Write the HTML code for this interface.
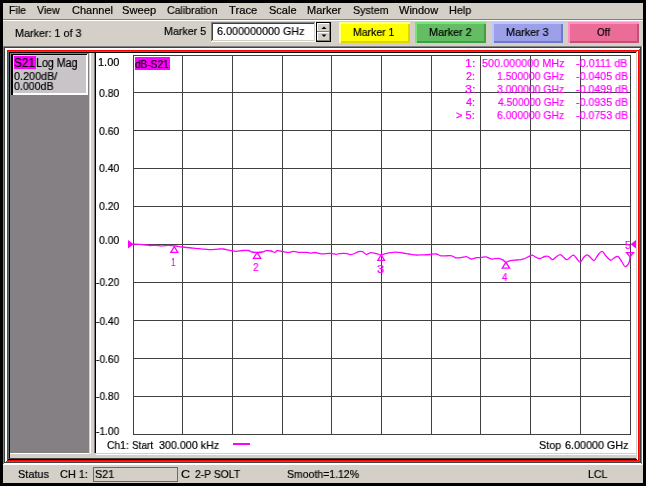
<!DOCTYPE html>
<html><head><meta charset="utf-8">
<style>
*{margin:0;padding:0;box-sizing:border-box}
html,body{width:646px;height:486px;overflow:hidden;background:#000}
body{position:relative;font-family:"Liberation Sans",sans-serif;font-size:11px;color:#000}
.a{position:absolute}
.t{position:absolute;white-space:pre;line-height:11px;font-size:11px;will-change:transform;-webkit-text-stroke:0.2px currentColor}
.m{color:#ff00ff}
svg{position:absolute;left:0;top:0}
</style></head><body>
<div class="a" style="left:3px;top:3px;width:640px;height:16px;background:#d4d0c8;"></div>
<div class="t" style="left:8.64px;top:5px;font-size:11px;line-height:11px;color:#000;transform:scaleX(0.9625);transform-origin:0 0;">File</div>
<div class="t" style="left:37.00px;top:5px;font-size:11px;line-height:11px;color:#000;transform:scaleX(0.9583);transform-origin:0 0;">View</div>
<div class="t" style="left:71.50px;top:5px;font-size:11px;line-height:11px;color:#000;">Channel</div>
<div class="t" style="left:122.18px;top:5px;font-size:11px;line-height:11px;color:#000;transform:scaleX(1.0156);transform-origin:0 0;">Sweep</div>
<div class="t" style="left:167.04px;top:5px;font-size:11px;line-height:11px;color:#000;transform:scaleX(0.9608);transform-origin:0 0;">Calibration</div>
<div class="t" style="left:229.40px;top:5px;font-size:11px;line-height:11px;color:#000;transform:scaleX(1.0222);transform-origin:0 0;">Trace</div>
<div class="t" style="left:268.70px;top:5px;font-size:11px;line-height:11px;color:#000;">Scale</div>
<div class="t" style="left:307.00px;top:5px;font-size:11px;line-height:11px;color:#000;">Marker</div>
<div class="t" style="left:352.53px;top:5px;font-size:11px;line-height:11px;color:#000;transform:scaleX(0.9714);transform-origin:0 0;">System</div>
<div class="t" style="left:399.00px;top:5px;font-size:11px;line-height:11px;color:#000;">Window</div>
<div class="t" style="left:449.42px;top:5px;font-size:11px;line-height:11px;color:#000;transform:scaleX(0.9810);transform-origin:0 0;">Help</div>
<div class="a" style="left:3px;top:19px;width:640px;height:1px;background:#808080;"></div>
<div class="a" style="left:3px;top:20px;width:640px;height:1px;background:#fff;"></div>
<div class="a" style="left:3px;top:21px;width:640px;height:25px;background:#d4d0c8;"></div>
<div class="t" style="left:14.62px;top:28px;font-size:11px;line-height:11px;color:#000;transform:scaleX(0.9791);transform-origin:0 0;">Marker: 1 of 3</div>
<div class="t" style="left:164.03px;top:26px;font-size:11px;line-height:11px;color:#000;transform:scaleX(0.9714);transform-origin:0 0;">Marker 5</div>
<div class="a" style="left:211px;top:22px;width:105px;height:20px;background:#fff;"></div>
<div class="a" style="left:211px;top:22px;width:105px;height:1px;background:#808080;"></div>
<div class="a" style="left:211px;top:22px;width:1px;height:20px;background:#808080;"></div>
<div class="a" style="left:212px;top:23px;width:103px;height:1px;background:#404040;"></div>
<div class="a" style="left:212px;top:23px;width:1px;height:18px;background:#404040;"></div>
<div class="a" style="left:211px;top:41px;width:105px;height:1px;background:#fff;"></div>
<div class="a" style="left:315px;top:22px;width:1px;height:20px;background:#fff;"></div>
<div class="a" style="left:212px;top:40px;width:103px;height:1px;background:#d4d0c8;"></div>
<div class="a" style="left:314px;top:23px;width:1px;height:18px;background:#d4d0c8;"></div>
<div class="t" style="left:216.72px;top:26px;font-size:11px;line-height:11px;color:#000;transform:scaleX(0.9807);transform-origin:0 0;">6.000000000 GHz</div>
<div class="a" style="left:316px;top:22px;width:15px;height:20px;background:#000;"></div>
<div class="a" style="left:317px;top:23px;width:13px;height:9px;background:#d4d0c8;"></div>
<div class="a" style="left:317px;top:23px;width:13px;height:1px;background:#fff;"></div>
<div class="a" style="left:317px;top:23px;width:1px;height:9px;background:#fff;"></div>
<div class="a" style="left:317px;top:31px;width:13px;height:1px;background:#808080;"></div>
<div class="a" style="left:329px;top:23px;width:1px;height:9px;background:#808080;"></div>
<div class="a" style="left:317px;top:32px;width:13px;height:9px;background:#d4d0c8;"></div>
<div class="a" style="left:317px;top:32px;width:13px;height:1px;background:#fff;"></div>
<div class="a" style="left:317px;top:32px;width:1px;height:9px;background:#fff;"></div>
<div class="a" style="left:317px;top:40px;width:13px;height:1px;background:#808080;"></div>
<div class="a" style="left:329px;top:32px;width:1px;height:9px;background:#808080;"></div>
<svg width="646" height="486"><path d="M321.5 29h5l-2.5-2.5z" fill="#000"/><path d="M321.5 34.5h5l-2.5 2.5z" fill="#000"/></svg>
<div class="a" style="left:339px;top:22px;width:71px;height:21px;background:#ffff00;"></div>
<div class="a" style="left:339px;top:22px;width:71px;height:2px;background:#ffff90;"></div>
<div class="a" style="left:339px;top:22px;width:2px;height:21px;background:#ffff90;"></div>
<div class="a" style="left:341px;top:41px;width:69px;height:2px;background:#e0d400;"></div>
<div class="a" style="left:408px;top:24px;width:2px;height:19px;background:#e0d400;"></div>
<div class="a" style="left:415px;top:22px;width:71px;height:21px;background:#64bc64;"></div>
<div class="a" style="left:415px;top:22px;width:71px;height:2px;background:#78e478;"></div>
<div class="a" style="left:415px;top:22px;width:2px;height:21px;background:#78e478;"></div>
<div class="a" style="left:417px;top:41px;width:69px;height:2px;background:#40a040;"></div>
<div class="a" style="left:484px;top:24px;width:2px;height:19px;background:#40a040;"></div>
<div class="a" style="left:492px;top:22px;width:71px;height:21px;background:#9ca0e8;"></div>
<div class="a" style="left:492px;top:22px;width:71px;height:2px;background:#c0c4ff;"></div>
<div class="a" style="left:492px;top:22px;width:2px;height:21px;background:#c0c4ff;"></div>
<div class="a" style="left:494px;top:41px;width:69px;height:2px;background:#7078c8;"></div>
<div class="a" style="left:561px;top:24px;width:2px;height:19px;background:#7078c8;"></div>
<div class="a" style="left:568px;top:22px;width:71px;height:21px;background:#ec6c98;"></div>
<div class="a" style="left:568px;top:22px;width:71px;height:2px;background:#ff90c8;"></div>
<div class="a" style="left:568px;top:22px;width:2px;height:21px;background:#ff90c8;"></div>
<div class="a" style="left:570px;top:41px;width:69px;height:2px;background:#c05078;"></div>
<div class="a" style="left:637px;top:24px;width:2px;height:19px;background:#c05078;"></div>
<div class="t" style="left:353.05px;top:27px;font-size:11px;line-height:11px;color:#000;transform:scaleX(0.9524);transform-origin:0 0;">Marker 1</div>
<div class="t" style="left:428.72px;top:27px;font-size:11px;line-height:11px;color:#000;transform:scaleX(0.9833);transform-origin:0 0;">Marker 2</div>
<div class="t" style="left:506.02px;top:27px;font-size:11px;line-height:11px;color:#000;transform:scaleX(0.9833);transform-origin:0 0;">Marker 3</div>
<div class="t" style="left:596.50px;top:27px;font-size:11px;line-height:11px;color:#000;transform:scaleX(0.9000);transform-origin:0 0;">Off</div>
<div class="a" style="left:3px;top:46px;width:640px;height:1px;background:#808080;"></div>
<div class="a" style="left:3px;top:46px;width:1px;height:419px;background:#808080;"></div>
<div class="a" style="left:3px;top:464px;width:640px;height:1px;background:#fff;"></div>
<div class="a" style="left:642px;top:46px;width:1px;height:419px;background:#fff;"></div>
<div class="a" style="left:4px;top:47px;width:638px;height:1px;background:#404040;"></div>
<div class="a" style="left:4px;top:47px;width:1px;height:417px;background:#404040;"></div>
<div class="a" style="left:4px;top:463px;width:638px;height:1px;background:#fff;"></div>
<div class="a" style="left:641px;top:47px;width:1px;height:417px;background:#808080;"></div>
<div class="a" style="left:5px;top:48px;width:636px;height:1px;background:#fff;"></div>
<div class="a" style="left:5px;top:48px;width:1px;height:415px;background:#fff;"></div>
<div class="a" style="left:5px;top:462px;width:636px;height:1px;background:#404040;"></div>
<div class="a" style="left:640px;top:48px;width:1px;height:415px;background:#404040;"></div>
<div class="a" style="left:6px;top:49px;width:634px;height:1px;background:#fff;"></div>
<div class="a" style="left:6px;top:49px;width:1px;height:413px;background:#fff;"></div>
<div class="a" style="left:6px;top:461px;width:634px;height:1px;background:#5a6e6e;"></div>
<div class="a" style="left:639px;top:49px;width:1px;height:413px;background:#5a6e6e;"></div>
<div class="a" style="left:7px;top:50px;width:632px;height:1px;background:#ff0000;"></div>
<div class="a" style="left:7px;top:50px;width:1px;height:411px;background:#ff0000;"></div>
<div class="a" style="left:7px;top:460px;width:632px;height:1px;background:#ff0000;"></div>
<div class="a" style="left:638px;top:50px;width:1px;height:411px;background:#ff0000;"></div>
<div class="a" style="left:8px;top:51px;width:630px;height:1px;background:#5a6e6e;"></div>
<div class="a" style="left:8px;top:51px;width:1px;height:409px;background:#5a6e6e;"></div>
<div class="a" style="left:8px;top:459px;width:630px;height:1px;background:#000;"></div>
<div class="a" style="left:637px;top:51px;width:1px;height:409px;background:#fff;"></div>
<div class="a" style="left:9px;top:52px;width:628px;height:1px;background:#000;"></div>
<div class="a" style="left:9px;top:52px;width:1px;height:407px;background:#000;"></div>
<div class="a" style="left:9px;top:458px;width:628px;height:1px;background:#404040;"></div>
<div class="a" style="left:636px;top:52px;width:1px;height:407px;background:#d4d0c8;"></div>
<div class="a" style="left:10px;top:53px;width:626px;height:405px;background:#d4d0c8;"></div>
<div class="a" style="left:10px;top:53px;width:79px;height:400px;background:#848084;"></div>
<div class="a" style="left:89px;top:53px;width:1px;height:405px;background:#d4d0c8;"></div>
<div class="a" style="left:90px;top:53px;width:1px;height:401px;background:#fff;"></div>
<div class="a" style="left:94px;top:53px;width:1px;height:400px;background:#808080;"></div>
<div class="a" style="left:95px;top:53px;width:1px;height:400px;background:#000;"></div>
<div class="a" style="left:96px;top:53px;width:540px;height:400px;background:#fff;"></div>
<div class="a" style="left:10px;top:453px;width:79px;height:1px;background:#fff;"></div>
<div class="a" style="left:96px;top:454px;width:540px;height:1px;background:#fff;"></div>
<div class="a" style="left:11px;top:54px;width:77px;height:41px;background:#c8c4c8;"></div>
<div class="a" style="left:11px;top:54px;width:77px;height:1px;background:#000;"></div>
<div class="a" style="left:11px;top:54px;width:1px;height:41px;background:#000;"></div>
<div class="a" style="left:12px;top:54px;width:1px;height:41px;background:#000;"></div>
<div class="a" style="left:13px;top:93px;width:75px;height:1px;background:#fff;"></div>
<div class="a" style="left:13px;top:94px;width:75px;height:1px;background:#fff;"></div>
<div class="a" style="left:86px;top:55px;width:1px;height:40px;background:#fff;"></div>
<div class="a" style="left:87px;top:54px;width:1px;height:41px;background:#fff;"></div>
<div class="a" style="left:13px;top:55px;width:73px;height:1px;background:#d4d0c8;"></div>
<div class="a" style="left:13px;top:55px;width:1px;height:38px;background:#d4d0c8;"></div>
<div class="a" style="left:14px;top:56px;width:22px;height:13px;background:#ff00ff;"></div>
<div class="t" style="left:13.72px;top:57px;font-size:12px;line-height:12px;color:#000;transform:scaleX(0.9750);transform-origin:0 0;">S21</div>
<div class="t" style="left:36.11px;top:57px;font-size:12px;line-height:12px;color:#000;transform:scaleX(0.8889);transform-origin:0 0;">Log Mag</div>
<div class="t" style="left:13.70px;top:71px;font-size:11px;line-height:11px;color:#000;transform:scaleX(0.9818);transform-origin:0 0;">0.200dB/</div>
<div class="t" style="left:13.70px;top:81px;font-size:11px;line-height:11px;color:#000;transform:scaleX(0.9634);transform-origin:0 0;">0.000dB</div>
<svg width="646" height="486"><path d="M133.5 55V435M182.5 55V435M232.5 55V435M282.5 55V435M331.5 55V435M381.5 55V435M431.5 55V435M480.5 55V435M530.5 55V435M580.5 55V435M630.5 55V435M133 55.5H631M133 92.5H631M133 130.5H631M133 168.5H631M133 206.5H631M133 244.5H631M133 282.5H631M133 320.5H631M133 358.5H631M133 396.5H631M133 434.5H631" stroke="#404040" stroke-width="1" fill="none" shape-rendering="crispEdges"/></svg>
<div class="t" style="left:98.30px;top:57px;font-size:11px;line-height:11px;color:#000;">1.00</div>
<div class="t" style="left:99.30px;top:88px;font-size:11px;line-height:11px;color:#000;transform:scaleX(0.9476);transform-origin:0 0;">0.80</div>
<div class="t" style="left:99.30px;top:126px;font-size:11px;line-height:11px;color:#000;transform:scaleX(0.9476);transform-origin:0 0;">0.60</div>
<div class="t" style="left:99.30px;top:163px;font-size:11px;line-height:11px;color:#000;transform:scaleX(0.9476);transform-origin:0 0;">0.40</div>
<div class="t" style="left:99.30px;top:201px;font-size:11px;line-height:11px;color:#000;transform:scaleX(0.9476);transform-origin:0 0;">0.20</div>
<div class="t" style="left:99.30px;top:235px;font-size:11px;line-height:11px;color:#000;transform:scaleX(0.9476);transform-origin:0 0;">0.00</div>
<div class="t" style="left:96.00px;top:277px;font-size:11px;line-height:11px;color:#000;transform:scaleX(0.9280);transform-origin:0 0;">-0.20</div>
<div class="t" style="left:96.00px;top:316px;font-size:11px;line-height:11px;color:#000;transform:scaleX(0.9280);transform-origin:0 0;">-0.40</div>
<div class="t" style="left:96.00px;top:354px;font-size:11px;line-height:11px;color:#000;transform:scaleX(0.9280);transform-origin:0 0;">-0.60</div>
<div class="t" style="left:96.00px;top:391px;font-size:11px;line-height:11px;color:#000;transform:scaleX(0.9280);transform-origin:0 0;">-0.80</div>
<div class="t" style="left:96.00px;top:426px;font-size:11px;line-height:11px;color:#000;transform:scaleX(0.9280);transform-origin:0 0;">-1.00</div>
<div class="a" style="left:135px;top:57px;width:35px;height:13px;background:#ff00ff;"></div>
<div class="t" style="left:135.30px;top:59px;font-size:11px;line-height:11px;color:#000;transform:scaleX(0.9167);transform-origin:0 0;">dB-S21</div>
<div class="t" style="left:465.17px;top:58px;font-size:11px;line-height:11px;color:#ff00ff;transform:scaleX(1.1286);transform-origin:0 0;">1:</div>
<div class="t" style="left:482.41px;top:58px;font-size:11px;line-height:11px;color:#ff00ff;transform:scaleX(0.9854);transform-origin:0 0;">500.000000 MHz</div>
<div class="t" style="left:576.00px;top:58px;font-size:11px;line-height:11px;color:#ff00ff;transform:scaleX(0.9865);transform-origin:0 0;">-0.0111 dB</div>
<div class="t" style="left:466.30px;top:71px;font-size:11px;line-height:11px;color:#ff00ff;transform:scaleX(0.9875);transform-origin:0 0;">2:</div>
<div class="t" style="left:497.05px;top:71px;font-size:11px;line-height:11px;color:#ff00ff;transform:scaleX(0.9457);transform-origin:0 0;">1.500000 GHz</div>
<div class="t" style="left:576.00px;top:71px;font-size:11px;line-height:11px;color:#ff00ff;transform:scaleX(0.9679);transform-origin:0 0;">-0.0405 dB</div>
<div class="t" style="left:465.17px;top:84px;font-size:11px;line-height:11px;color:#ff00ff;transform:scaleX(1.1286);transform-origin:0 0;">3:</div>
<div class="t" style="left:497.05px;top:84px;font-size:11px;line-height:11px;color:#ff00ff;transform:scaleX(0.9457);transform-origin:0 0;">3.000000 GHz</div>
<div class="t" style="left:576.00px;top:84px;font-size:11px;line-height:11px;color:#ff00ff;transform:scaleX(0.9679);transform-origin:0 0;">-0.0499 dB</div>
<div class="t" style="left:466.30px;top:97px;font-size:11px;line-height:11px;color:#ff00ff;transform:scaleX(0.9875);transform-origin:0 0;">4:</div>
<div class="t" style="left:498.00px;top:97px;font-size:11px;line-height:11px;color:#ff00ff;transform:scaleX(0.9324);transform-origin:0 0;">4.500000 GHz</div>
<div class="t" style="left:576.00px;top:97px;font-size:11px;line-height:11px;color:#ff00ff;transform:scaleX(0.9679);transform-origin:0 0;">-0.0935 dB</div>
<div class="t" style="left:455.99px;top:110px;font-size:11px;line-height:11px;color:#ff00ff;transform:scaleX(1.0118);transform-origin:0 0;">&gt; 5:</div>
<div class="t" style="left:497.05px;top:110px;font-size:11px;line-height:11px;color:#ff00ff;transform:scaleX(0.9457);transform-origin:0 0;">6.000000 GHz</div>
<div class="t" style="left:576.00px;top:110px;font-size:11px;line-height:11px;color:#ff00ff;transform:scaleX(0.9679);transform-origin:0 0;">-0.0753 dB</div>
<svg width="646" height="486"><g fill="none" stroke="#ff00ff" stroke-width="1.3">
<path d="M133.00 244.20C134.17 244.22 137.83 244.17 140.00 244.30C142.17 244.43 144.33 244.80 146.00 245.00C147.67 245.20 148.33 245.43 150.00 245.50C151.67 245.57 154.00 245.35 156.00 245.40C158.00 245.45 160.00 245.82 162.00 245.80C164.00 245.78 166.23 245.32 168.00 245.30C169.77 245.28 171.27 245.58 172.60 245.70C173.93 245.82 174.33 245.78 176.00 246.00C177.67 246.22 179.93 246.67 182.60 247.00C185.27 247.33 188.93 247.70 192.00 248.00C195.07 248.30 198.17 248.53 201.00 248.80C203.83 249.07 206.17 249.55 209.00 249.60C211.83 249.65 215.67 249.20 218.00 249.10C220.33 249.00 221.00 248.80 223.00 249.00C225.00 249.20 227.80 249.92 230.00 250.30C232.20 250.68 234.13 251.27 236.20 251.30C238.27 251.33 240.33 250.63 242.40 250.50C244.47 250.37 247.05 250.25 248.60 250.50C250.15 250.75 250.28 251.67 251.70 252.00C253.12 252.33 255.30 252.50 257.10 252.50C258.90 252.50 260.95 252.30 262.50 252.00C264.05 251.70 264.98 250.87 266.40 250.70C267.82 250.53 269.58 250.72 271.00 251.00C272.42 251.28 273.87 252.45 274.90 252.40C275.93 252.35 275.92 250.83 277.20 250.70C278.48 250.57 280.67 251.32 282.60 251.60C284.53 251.88 286.98 252.45 288.80 252.40C290.62 252.35 291.68 251.30 293.50 251.30C295.32 251.30 297.38 252.22 299.70 252.40C302.02 252.58 305.60 252.27 307.40 252.40C309.20 252.53 309.22 253.18 310.50 253.20C311.78 253.22 313.30 252.40 315.10 252.50C316.90 252.60 318.82 253.65 321.30 253.80C323.78 253.95 327.52 253.32 330.00 253.40C332.48 253.48 334.65 254.27 336.20 254.30C337.75 254.33 337.50 253.72 339.30 253.60C341.10 253.48 345.20 253.43 347.00 253.60C348.80 253.77 349.07 254.53 350.10 254.60C351.13 254.67 351.78 254.50 353.20 254.00C354.62 253.50 357.05 252.00 358.60 251.60C360.15 251.20 361.20 251.15 362.50 251.60C363.80 252.05 364.98 254.13 366.40 254.30C367.82 254.47 369.33 252.72 371.00 252.60C372.67 252.48 374.72 253.20 376.40 253.60C378.08 254.00 379.55 255.00 381.10 255.00C382.65 255.00 383.38 254.07 385.70 253.60C388.02 253.13 392.15 252.30 395.00 252.20C397.85 252.10 400.47 252.70 402.80 253.00C405.13 253.30 406.68 253.67 409.00 254.00C411.32 254.33 414.38 254.87 416.70 255.00C419.02 255.13 420.68 254.88 422.90 254.80C425.12 254.72 427.78 254.63 430.00 254.50C432.22 254.37 434.40 253.78 436.20 254.00C438.00 254.22 439.25 255.50 440.80 255.80C442.35 256.10 443.68 255.80 445.50 255.80C447.32 255.80 450.03 255.47 451.70 255.80C453.37 256.13 453.95 257.50 455.50 257.80C457.05 258.10 459.18 257.80 461.00 257.60C462.82 257.40 464.73 256.37 466.40 256.60C468.07 256.83 469.33 258.83 471.00 259.00C472.67 259.17 474.72 257.83 476.40 257.60C478.08 257.37 479.55 257.72 481.10 257.60C482.65 257.48 483.90 256.67 485.70 256.90C487.50 257.13 489.83 258.75 491.90 259.00C493.97 259.25 496.28 258.27 498.10 258.40C499.92 258.53 501.50 259.17 502.80 259.80C504.10 260.43 504.62 262.07 505.90 262.20C507.18 262.33 508.70 260.97 510.50 260.60C512.30 260.23 514.63 260.23 516.70 260.00C518.77 259.77 520.68 259.90 522.90 259.20C525.12 258.50 528.43 256.47 530.00 255.80C531.57 255.13 531.27 254.93 532.30 255.20C533.33 255.47 534.92 256.85 536.20 257.40C537.48 257.95 538.58 258.65 540.00 258.50C541.42 258.35 543.27 256.83 544.70 256.50C546.13 256.17 547.32 255.98 548.60 256.50C549.88 257.02 551.17 259.52 552.40 259.60C553.63 259.68 554.70 257.83 556.00 257.00C557.30 256.17 558.87 254.52 560.20 254.60C561.53 254.68 562.83 256.67 564.00 257.50C565.17 258.33 565.65 259.98 567.20 259.60C568.75 259.22 571.67 255.30 573.30 255.20C574.93 255.10 575.83 257.87 577.00 259.00C578.17 260.13 579.13 262.33 580.30 262.00C581.47 261.67 582.83 258.18 584.00 257.00C585.17 255.82 586.13 254.73 587.30 254.90C588.47 255.07 589.85 257.07 591.00 258.00C592.15 258.93 593.03 261.00 594.20 260.50C595.37 260.00 596.70 256.52 598.00 255.00C599.30 253.48 600.67 251.23 602.00 251.40C603.33 251.57 604.58 254.53 606.00 256.00C607.42 257.47 609.17 259.87 610.50 260.20C611.83 260.53 612.72 258.60 614.00 258.00C615.28 257.40 616.87 255.93 618.20 256.60C619.53 257.27 620.83 260.33 622.00 262.00C623.17 263.67 624.02 266.53 625.20 266.60C626.38 266.67 628.30 264.00 629.10 262.40C629.90 260.80 629.85 257.90 630.00 257.00"/>
<path d="M174.3 246.6L170.8 252.3H177.8Z"/>
<path d="M257.1 252.6L253.4 258.3H260.8Z"/>
<path d="M381.1 255L377.8 260.3H384.6Z"/>
<path d="M505.9 262.3L502.2 268.2H509.6Z"/>
<path d="M626.5 252.6H633.5L630 256.8Z"/>
</g>
<path d="M128 240L133.7 244.3L128 248.6Z" fill="#ff00ff"/>
<path d="M636 240L630.6 244.3L636 248.6Z" fill="#ff00ff"/>
</svg>
<div class="t" style="left:171.24px;top:257px;font-size:11px;line-height:11px;color:#ff00ff;transform:scaleX(0.7600);transform-origin:0 0;">1</div>
<div class="t" style="left:253.00px;top:262px;font-size:11px;line-height:11px;color:#ff00ff;transform:scaleX(0.9167);transform-origin:0 0;">2</div>
<div class="t" style="left:376.52px;top:264px;font-size:11px;line-height:11px;color:#ff00ff;transform:scaleX(1.1800);transform-origin:0 0;">3</div>
<div class="t" style="left:501.70px;top:272px;font-size:11px;line-height:11px;color:#ff00ff;transform:scaleX(0.8833);transform-origin:0 0;">4</div>
<div class="t" style="left:625.08px;top:240px;font-size:11px;line-height:11px;color:#ff00ff;transform:scaleX(0.9200);transform-origin:0 0;">5</div>
<div class="t" style="left:106.76px;top:440px;font-size:11px;line-height:11px;color:#000;transform:scaleX(0.9364);transform-origin:0 0;">Ch1:</div>
<div class="t" style="left:131.90px;top:440px;font-size:11px;line-height:11px;color:#000;transform:scaleX(0.9045);transform-origin:0 0;">Start</div>
<div class="t" style="left:159.03px;top:440px;font-size:11px;line-height:11px;color:#000;transform:scaleX(0.9733);transform-origin:0 0;">300.000 kHz</div>
<div class="t" style="left:538.52px;top:440px;font-size:11px;line-height:11px;color:#000;transform:scaleX(0.9762);transform-origin:0 0;">Stop</div>
<div class="t" style="left:565.02px;top:440px;font-size:11px;line-height:11px;color:#000;transform:scaleX(0.9794);transform-origin:0 0;">6.00000 GHz</div>
<div class="a" style="left:233px;top:443px;width:17px;height:2px;background:#ff00ff;"></div>
<div class="a" style="left:3px;top:465px;width:640px;height:18px;background:#d4d0c8;"></div>
<div class="t" style="left:18.31px;top:469px;font-size:11px;line-height:11px;color:#000;transform:scaleX(0.9900);transform-origin:0 0;">Status</div>
<div class="t" style="left:59.51px;top:469px;font-size:11px;line-height:11px;color:#000;transform:scaleX(0.9885);transform-origin:0 0;">CH 1:</div>
<div class="t" style="left:95.42px;top:469px;font-size:11px;line-height:11px;color:#000;transform:scaleX(0.9778);transform-origin:0 0;">S21</div>
<div class="t" style="left:181.27px;top:469px;font-size:11px;line-height:11px;color:#000;transform:scaleX(1.1333);transform-origin:0 0;">C</div>
<div class="t" style="left:195.40px;top:469px;font-size:11px;line-height:11px;color:#000;transform:scaleX(0.9417);transform-origin:0 0;">2-P SOLT</div>
<div class="t" style="left:286.65px;top:469px;font-size:11px;line-height:11px;color:#000;transform:scaleX(0.9541);transform-origin:0 0;">Smooth=1.12%</div>
<div class="t" style="left:588.33px;top:469px;font-size:11px;line-height:11px;color:#000;transform:scaleX(0.9684);transform-origin:0 0;">LCL</div>
<div class="a" style="left:93px;top:467px;width:85px;height:15px;border:1px solid #ff00ff"></div>
</body></html>
